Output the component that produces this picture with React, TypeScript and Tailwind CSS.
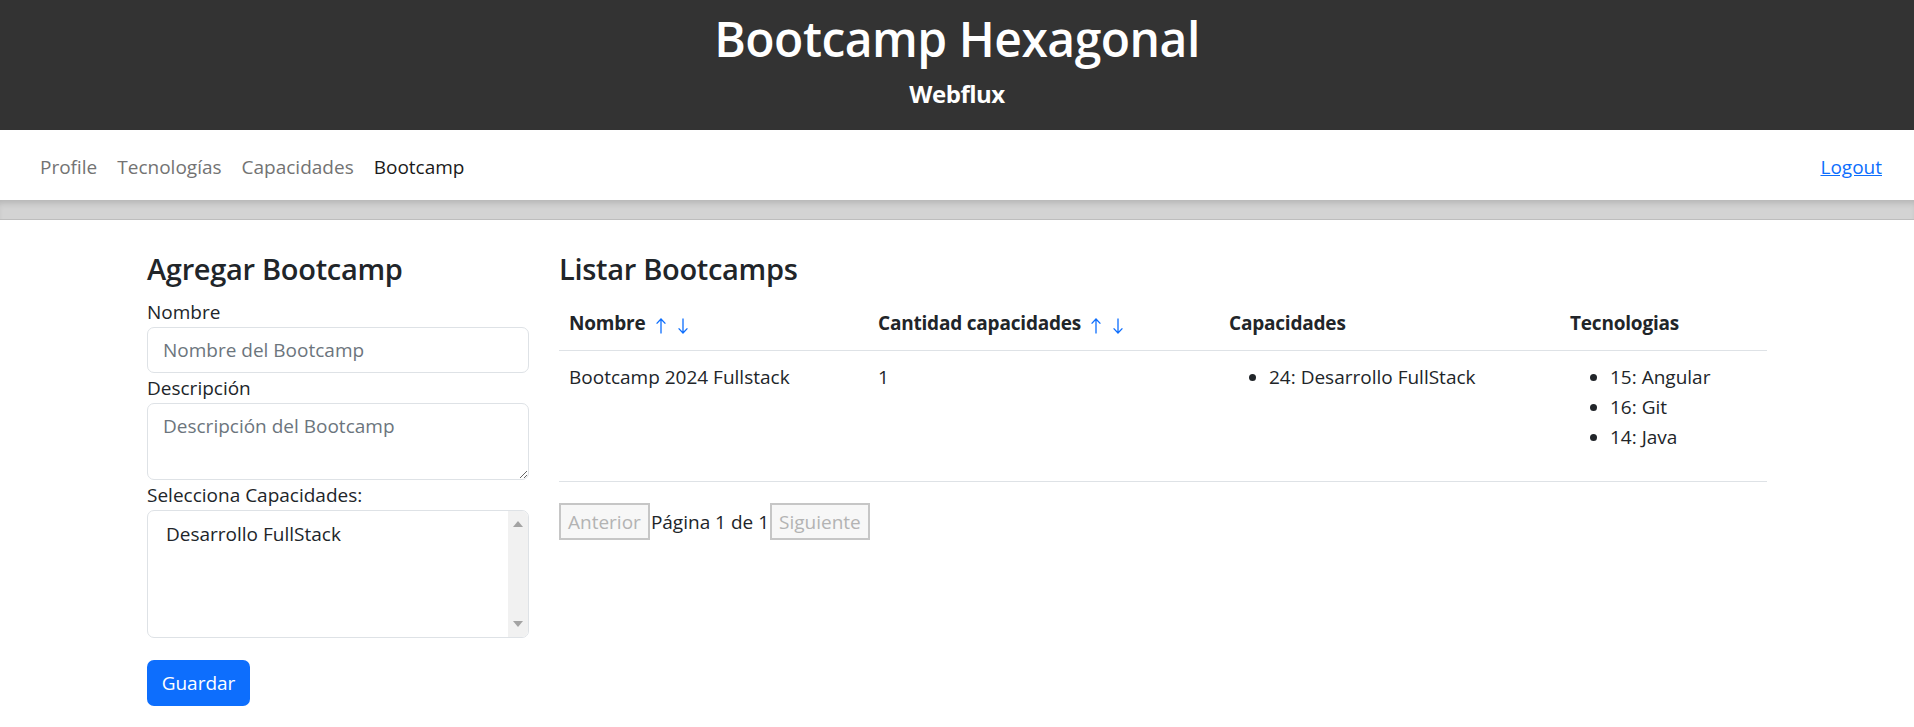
import React from "react";

function UpArrow() {
  return (
    <svg width="12" height="16" viewBox="0 0 12 16" className="block">
      <path d="M6 15.5V1.2M1.6 5.6L6 1l4.4 4.6" stroke="#0d6efd" strokeWidth="1.3" fill="none" />
    </svg>
  );
}
function DownArrow() {
  return (
    <svg width="12" height="16" viewBox="0 0 12 16" className="block">
      <path d="M6 0.5v14.3M1.6 10.4L6 15l4.4-4.6" stroke="#0d6efd" strokeWidth="1.3" fill="none" />
    </svg>
  );
}

function SortHead({ label }: { label: string }) {
  return (
    <span className="inline-flex items-center">
      <span>{label}</span>
      <span className="ml-[9px] translate-y-[3px]"><UpArrow /></span>
      <span className="ml-[10px] translate-y-[3px]"><DownArrow /></span>
    </span>
  );
}

export default function App() {
  return (
    <div className="min-h-[727px] bg-white font-['Segoe_UI','Open_Sans',sans-serif] text-[19px] leading-[30px] text-[#212529]">
      {/* Header */}
      <header className="h-[130px] bg-[#333333] pt-[9px] text-center text-white">
        <h1 className="text-[48px] leading-[60px] font-semibold tracking-[-0.5px]">Bootcamp Hexagonal</h1>
        <h5 className="mt-[10px] text-[24px] leading-[30px] font-bold tracking-[-0.5px]">Webflux</h5>
      </header>

      {/* Nav */}
      <nav className="flex h-[70px] items-center justify-between bg-white pl-[30px] pr-[32px] pt-[3px]">
        <ul className="flex items-center">
          <li className="px-[10px] text-[#737373]">Profile</li>
          <li className="px-[10px] text-[#737373]">Tecnologías</li>
          <li className="px-[10px] text-[#737373]">Capacidades</li>
          <li className="px-[10px] text-[#1a1a1a]">Bootcamp</li>
        </ul>
        <a className="text-[#0d6efd] underline">Logout</a>
      </nav>
      <div className="h-[20px] border-b border-[#bdbdbd] bg-[#d3d3d3] shadow-[inset_0_6px_6px_-3px_rgba(0,0,0,0.15)]" />

      {/* Main */}
      <main className="mx-auto w-[1650px] px-[15px] pt-[31px]">
        <div className="flex gap-[30px]">
          {/* Left column */}
          <section className="w-[382px] shrink-0">
            <h4 className="mb-[10px] text-[29px] leading-[36px] font-semibold tracking-[-0.3px]">Agregar Bootcamp</h4>
            <label className="block">Nombre</label>
            <input
              className="block h-[46px] w-full rounded-[7px] border border-[#dee2e6] px-[15px] text-[19px] placeholder:text-[#6c757d] outline-none"
              placeholder="Nombre del Bootcamp"
            />
            <label className="block">Descripción</label>
            <textarea
              className="block h-[77px] w-full rounded-[7px] border border-[#dee2e6] px-[15px] py-[7px] text-[19px] leading-[30px] placeholder:text-[#6c757d] outline-none"
              placeholder="Descripción del Bootcamp"
            />
            <label className="block">Selecciona Capacidades:</label>
            <div className="flex h-[128px] w-full overflow-hidden rounded-[7px] border border-[#dee2e6]">
              <div className="flex-1 pl-[18px] pt-[8px]">Desarrollo FullStack</div>
              <div className="flex w-[20px] flex-col items-center justify-between bg-[#f1f1f1] py-[10px]">
                <svg width="10" height="6" viewBox="0 0 10 6"><path d="M5 0L10 6H0z" fill="#a3a3a3" /></svg>
                <svg width="10" height="6" viewBox="0 0 10 6"><path d="M0 0h10L5 6z" fill="#a3a3a3" /></svg>
              </div>
            </div>
            <button className="mt-[22px] h-[46px] w-[103px] rounded-[7px] bg-[#0d6efd] text-white">Guardar</button>
          </section>

          {/* Right column */}
          <section className="w-[1208px]">
            <h4 className="mb-[10px] text-[29px] leading-[36px] font-semibold tracking-[-0.3px]">Listar Bootcamps</h4>
            <table className="mb-[21px] w-[1208px] table-fixed border-collapse text-left">
              <colgroup>
                <col className="w-[309px]" />
                <col className="w-[351px]" />
                <col className="w-[341px]" />
                <col />
              </colgroup>
              <thead>
                <tr className="border-b border-[#dee2e6]">
                  <th className="px-[10px] pt-[11px] pb-[12px] align-middle font-bold tracking-[-0.2px]"><SortHead label="Nombre" /></th>
                  <th className="px-[10px] pt-[11px] pb-[12px] align-middle font-bold tracking-[-0.2px]"><SortHead label="Cantidad capacidades" /></th>
                  <th className="px-[10px] pt-[11px] pb-[12px] align-middle font-bold tracking-[-0.2px]">Capacidades</th>
                  <th className="px-[10px] pt-[11px] pb-[12px] align-middle font-bold tracking-[-0.2px]">Tecnologias</th>
                </tr>
              </thead>
              <tbody>
                <tr className="border-b border-[#dee2e6]">
                  <td className="p-[10px] pt-[11px] pb-[9px] align-top">Bootcamp 2024 Fullstack</td>
                  <td className="p-[10px] pt-[11px] pb-[9px] align-top">1</td>
                  <td className="p-[10px] pt-[11px] pb-[9px] align-top">
                    <ul className="mb-[20px] list-disc pl-[40px]">
                      <li>24: Desarrollo FullStack</li>
                    </ul>
                  </td>
                  <td className="p-[10px] pt-[11px] pb-[9px] align-top">
                    <ul className="mb-[20px] list-disc pl-[40px]">
                      <li>15: Angular</li>
                      <li>16: Git</li>
                      <li>14: Java</li>
                    </ul>
                  </td>
                </tr>
              </tbody>
            </table>
            <div className="flex items-center">
              <button disabled className="h-[37px] border-2 border-[#c6c6c6] bg-[#f7f7f7] px-[7px] leading-[30px] text-[#b3b3b3]">Anterior</button>
              <span className="px-[1px]">Página 1 de 1</span>
              <button disabled className="h-[37px] border-2 border-[#c6c6c6] bg-[#f7f7f7] px-[7px] leading-[30px] text-[#b3b3b3]">Siguiente</button>
            </div>
          </section>
        </div>
      </main>
    </div>
  );
}
